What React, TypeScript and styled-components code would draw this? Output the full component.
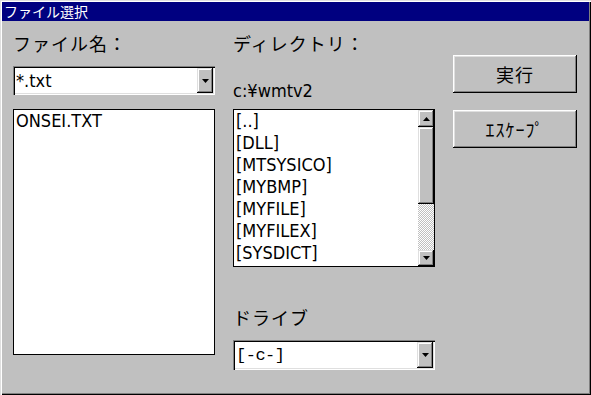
import styled, { createGlobalStyle } from "styled-components";

const GlobalStyle = createGlobalStyle`
  html, body {
    margin: 0;
    padding: 0;
    background: #c0c0c0;
    overflow: hidden;
  }
`;

const jp = `"Noto Sans CJK JP", "Noto Sans", sans-serif`;
const narrow = `"Liberation Sans Narrow", "DejaVu Sans Condensed", "Liberation Sans", "Noto Sans CJK JP", sans-serif`;

const Window = styled.div`
  width: 591px;
  height: 395px;
  box-sizing: border-box;
  padding: 2px;
  background: #c0c0c0;
  box-shadow: inset 1px 1px #dfdfdf, inset 2px 2px #ffffff,
    inset -1px -1px #000000, inset -2px -2px #808080;
  display: flex;
  flex-direction: column;
`;

const TitleBar = styled.div`
  height: 19px;
  background: #000080;
  color: #ffffff;
  font-family: ${jp};
  font-size: 14px;
  line-height: 19px;
  padding-left: 2px;
`;

const Body = styled.div`
  display: grid;
  grid-template-columns: 202px 202px 124px;
  column-gap: 18px;
  padding: 11px 0 0 11px;
`;

const Column = styled.div`
  display: flex;
  flex-direction: column;
  align-items: flex-start;
`;

const Label = styled.div<{ $top?: number }>`
  font-family: ${jp};
  font-size: 18px;
  line-height: 22px;
  letter-spacing: 1px;
  color: #000000;
  margin-top: ${(p) => p.$top ?? 0}px;
`;

const PathText = styled.div`
  font-family: ${narrow};
  font-size: 18px;
  line-height: 22px;
  margin-top: 26px;
`;

const Combo = styled.div<{ $top: number; $height: number }>`
  width: 202px;
  height: ${(p) => p.$height}px;
  margin-top: ${(p) => p.$top}px;
  box-sizing: border-box;
  padding: 2px;
  background: #ffffff;
  box-shadow: inset 1px 1px #808080, inset 2px 2px #000000,
    inset -1px -1px #ffffff, inset -2px -2px #dfdfdf;
  display: flex;
  align-items: stretch;
`;

const ComboText = styled.div<{ $mono?: boolean }>`
  flex: 1;
  font-family: ${(p) => (p.$mono ? `"Liberation Mono", monospace` : narrow)};
  font-size: ${(p) => (p.$mono ? 17 : 18)}px;
  letter-spacing: ${(p) => (p.$mono ? -0.5 : 0)}px;
  display: flex;
  align-items: center;
  padding-left: 1px;
`;

const DropButton = styled.div`
  width: 16px;
  background: #c0c0c0;
  box-shadow: inset -1px -1px #000000, inset 1px 1px #dfdfdf,
    inset -2px -2px #808080, inset 2px 2px #ffffff;
  display: flex;
  align-items: center;
  justify-content: center;
`;

const ListBox = styled.div<{ $height: number; $top: number }>`
  width: 200px;
  height: ${(p) => p.$height}px;
  margin-top: ${(p) => p.$top}px;
  border: 1px solid #000000;
  background: #ffffff;
  display: flex;
`;

const Items = styled.div`
  flex: 1;
  padding: 0 0 0 2px;
  overflow: hidden;
`;

const Item = styled.div`
  font-family: ${narrow};
  font-size: 18px;
  line-height: 22px;
  white-space: nowrap;
`;

const ScrollBar = styled.div`
  width: 16px;
  display: flex;
  flex-direction: column;
`;

const ScrollButton = styled.div<{ $h: number }>`
  height: ${(p) => p.$h}px;
  background: #c0c0c0;
  box-shadow: inset -1px -1px #000000, inset 1px 1px #dfdfdf,
    inset -2px -2px #808080, inset 2px 2px #ffffff;
  display: flex;
  align-items: center;
  justify-content: center;
`;

const Track = styled.div`
  flex: 1;
  background: repeating-conic-gradient(#c0c0c0 0 25%, #ffffff 0 50%) 0 0 / 2px
    2px;
`;

const PushButton = styled.button<{ $top: number }>`
  width: 124px;
  height: 38px;
  margin-top: ${(p) => p.$top}px;
  padding: 0;
  border: none;
  background: #c0c0c0;
  box-shadow: inset -1px -1px #000000, inset 1px 1px #ffffff,
    inset -2px -2px #808080, inset 2px 2px #dfdfdf;
  font-family: ${jp};
  font-size: 18px;
  color: #000000;
  letter-spacing: 1px;
`;

const Arrow = ({ up }: { up?: boolean }) => (
  <svg width="7" height="4" viewBox="0 0 7 4">
    <path d={up ? "M3.5 0 L7 4 L0 4 Z" : "M0 0 L7 0 L3.5 4 Z"} fill="#000" />
  </svg>
);

const dirs = ["[..]", "[DLL]", "[MTSYSICO]", "[MYBMP]", "[MYFILE]", "[MYFILEX]", "[SYSDICT]"];

export default function App() {
  return (
    <>
      <GlobalStyle />
      <Window>
        <TitleBar>ファイル選択</TitleBar>
        <Body>
          <Column>
            <Label>ファイル名：</Label>
            <Combo $top={12} $height={29}>
              <ComboText>*.txt</ComboText>
              <DropButton>
                <Arrow />
              </DropButton>
            </Combo>
            <ListBox $top={14} $height={244}>
              <Items>
                <Item>ONSEI.TXT</Item>
              </Items>
            </ListBox>
          </Column>
          <Column>
            <Label>ディレクトリ：</Label>
            <PathText>c:¥wmtv2</PathText>
            <ListBox $top={7} $height={156}>
              <Items>
                {dirs.map((d) => (
                  <Item key={d}>{d}</Item>
                ))}
              </Items>
              <ScrollBar>
                <ScrollButton $h={17}>
                  <Arrow up />
                </ScrollButton>
                <ScrollButton $h={77} />
                <Track />
                <ScrollButton $h={16}>
                  <Arrow />
                </ScrollButton>
              </ScrollBar>
            </ListBox>
            <Label $top={39}>ドライブ</Label>
            <Combo $top={12} $height={30}>
              <ComboText $mono>[-c-]</ComboText>
              <DropButton>
                <Arrow />
              </DropButton>
            </Combo>
          </Column>
          <Column>
            <PushButton $top={23}>実行</PushButton>
            <PushButton $top={17}>ｴｽｹｰﾌﾟ</PushButton>
          </Column>
        </Body>
      </Window>
    </>
  );
}
